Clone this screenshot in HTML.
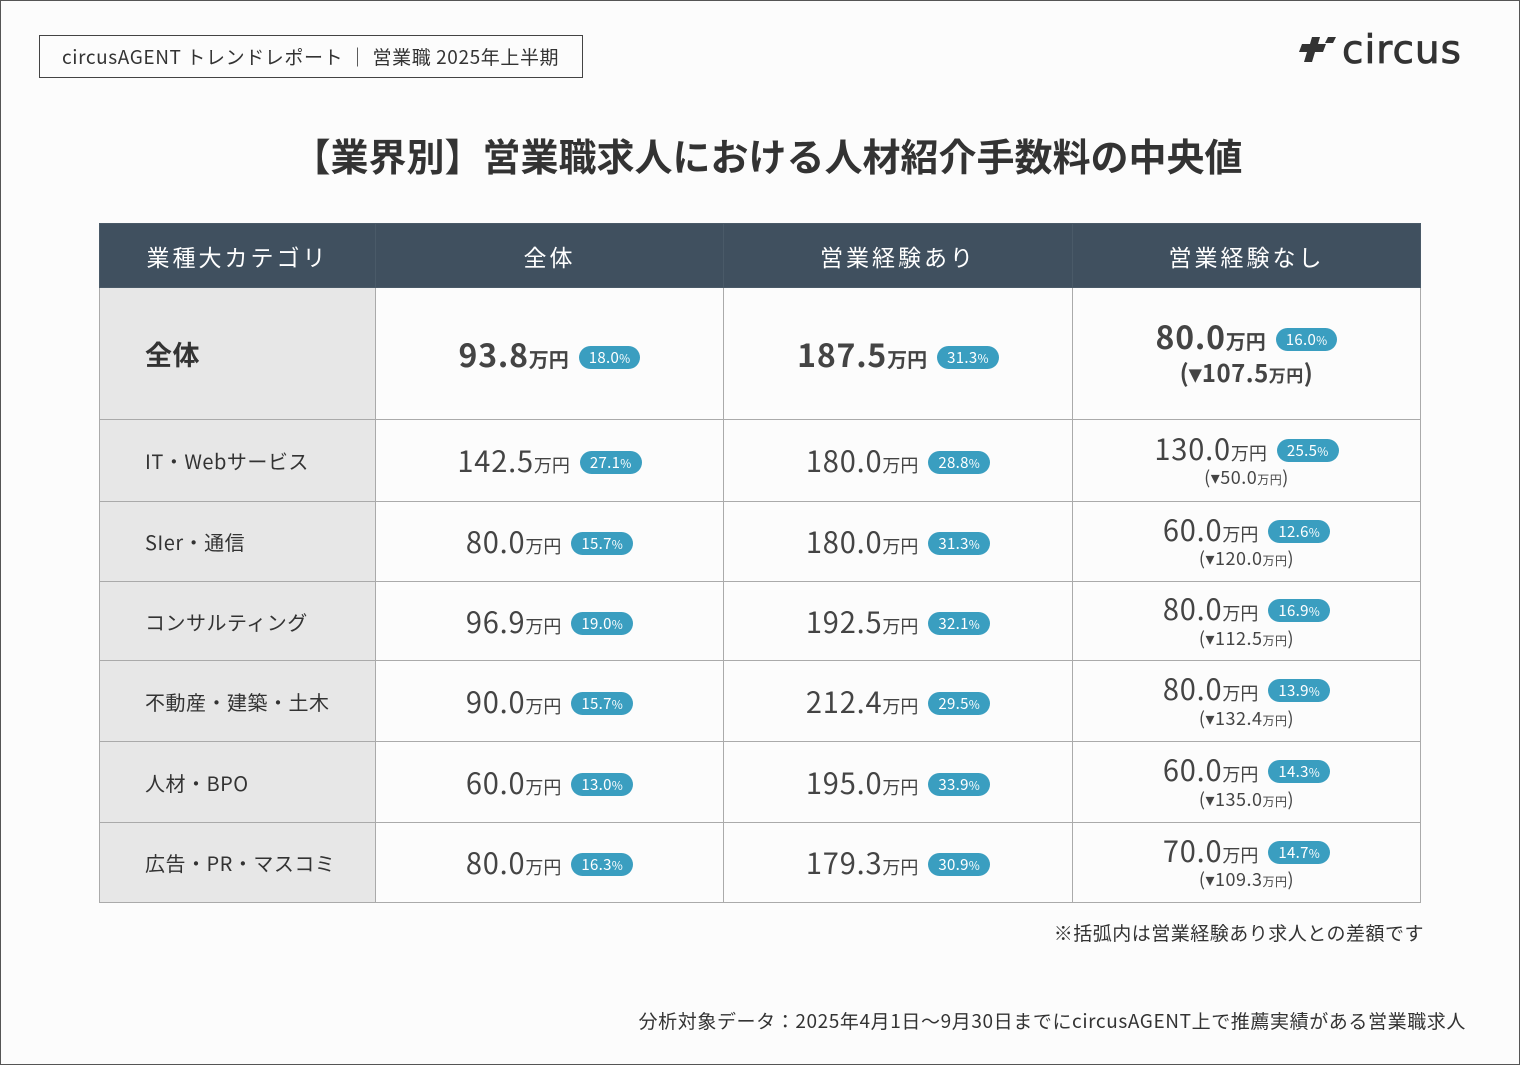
<!DOCTYPE html>
<html><head><meta charset="utf-8"><style>
*{margin:0;padding:0;box-sizing:border-box}
body{width:1520px;height:1065px;background:#fcfcfc;font-family:"Noto Sans CJK JP","Liberation Sans",sans-serif;color:#333;position:relative;overflow:hidden}
.frame{position:absolute;left:0;top:0;width:1520px;height:1065px;border:1px solid #555}
.tag{position:absolute;left:39px;top:35px;width:544px;height:43px;border:1px solid #444;font-size:19px;letter-spacing:0.6px;line-height:41px;padding-left:22px;color:#333;white-space:nowrap}
.logo{position:absolute;left:1298px;top:28px;height:44px;display:flex;align-items:center}
.logo span{font-size:39px;color:#333;font-family:"DejaVu Sans",sans-serif;margin-left:2px;letter-spacing:1px;-webkit-text-stroke:0.8px #333}
h1{position:absolute;left:0;width:1535px;top:127px;text-align:center;font-size:38px;letter-spacing:0px;font-weight:bold;color:#333;line-height:56px}
table{position:absolute;left:99px;top:223px;border-collapse:collapse;width:1322px}
td,th{border:1px solid #aaa;text-align:center;vertical-align:middle}
th{background:#40505f;color:#fff;font-weight:normal;font-size:23px;height:64px;letter-spacing:3px;border-color:#4a5a68}
td.c{background:#e7e7e7;text-align:left;padding-left:45px;font-size:20px;letter-spacing:0.5px;width:276px}
td{background:#fcfcfc;line-height:1.25}
.n{font-size:29px;color:#444;letter-spacing:0.8px}
.u{font-size:18px;letter-spacing:0}
.b{display:inline-block;background:#3a9ec0;color:#fff;font-size:15px;border-radius:12px;padding:0 10px;height:23px;line-height:23px;vertical-align:4px;margin-left:10px;letter-spacing:0.3px}
.b small{font-size:12px}
.d{font-size:18px;color:#444;line-height:22px;letter-spacing:0.5px}
.d small{font-size:12px}
tr.big .n{font-size:32px;font-weight:bold}
tr.big .u{font-size:20px}
.note{position:absolute;right:96px;top:919px;font-size:19px;letter-spacing:0.5px;color:#333}
.src{position:absolute;right:54px;top:1007px;font-size:19px;letter-spacing:0.6px;color:#333}
</style></head><body>
<div class="frame"></div>
<div class="tag">circusAGENT トレンドレポート ｜ 営業職 2025年上半期</div>
<div class="logo"><svg width="42" height="34" viewBox="0 0 42 34"><path d="M14 4h8l-2 7h8l-3 8h-8l-3 10h-8l3-10H1l3-8h8z" fill="#333"/><path d="M30 4h8l-3 6h-8z" fill="#333"/></svg><span>circus</span></div>
<h1>【業界別】営業職求人における人材紹介手数料の中央値</h1>
<table>
<tr><th style="width:276px">業種大カテゴリ</th><th style="width:348px">全体</th><th style="width:349px">営業経験あり</th><th>営業経験なし</th></tr>
<tr class="big" style="height:132px"><td class="c" style="font-size:27px;font-weight:bold">全体</td><td><span class="n">93.8<span class="u">万円</span></span><span class="b">18.0<small>%</small></span></td><td><span class="n">187.5<span class="u">万円</span></span><span class="b">31.3<small>%</small></span></td><td><span class="n">80.0<span class="u">万円</span></span><span class="b">16.0<small>%</small></span><div class="d" style="font-size:24px;font-weight:bold;line-height:32px">(▾107.5<span style="font-size:17px">万円</span>)</div></td></tr>
<tr style="height:82px"><td class="c">IT・Webサービス</td><td><span class="n">142.5<span class="u">万円</span></span><span class="b">27.1<small>%</small></span></td><td><span class="n">180.0<span class="u">万円</span></span><span class="b">28.8<small>%</small></span></td><td><span class="n">130.0<span class="u">万円</span></span><span class="b">25.5<small>%</small></span><div class="d">(▾50.0<small>万円</small>)</div></td></tr>
<tr style="height:80px"><td class="c">SIer・通信</td><td><span class="n">80.0<span class="u">万円</span></span><span class="b">15.7<small>%</small></span></td><td><span class="n">180.0<span class="u">万円</span></span><span class="b">31.3<small>%</small></span></td><td><span class="n">60.0<span class="u">万円</span></span><span class="b">12.6<small>%</small></span><div class="d">(▾120.0<small>万円</small>)</div></td></tr>
<tr style="height:79px"><td class="c">コンサルティング</td><td><span class="n">96.9<span class="u">万円</span></span><span class="b">19.0<small>%</small></span></td><td><span class="n">192.5<span class="u">万円</span></span><span class="b">32.1<small>%</small></span></td><td><span class="n">80.0<span class="u">万円</span></span><span class="b">16.9<small>%</small></span><div class="d">(▾112.5<small>万円</small>)</div></td></tr>
<tr style="height:81px"><td class="c">不動産・建築・土木</td><td><span class="n">90.0<span class="u">万円</span></span><span class="b">15.7<small>%</small></span></td><td><span class="n">212.4<span class="u">万円</span></span><span class="b">29.5<small>%</small></span></td><td><span class="n">80.0<span class="u">万円</span></span><span class="b">13.9<small>%</small></span><div class="d">(▾132.4<small>万円</small>)</div></td></tr>
<tr style="height:81px"><td class="c">人材・BPO</td><td><span class="n">60.0<span class="u">万円</span></span><span class="b">13.0<small>%</small></span></td><td><span class="n">195.0<span class="u">万円</span></span><span class="b">33.9<small>%</small></span></td><td><span class="n">60.0<span class="u">万円</span></span><span class="b">14.3<small>%</small></span><div class="d">(▾135.0<small>万円</small>)</div></td></tr>
<tr style="height:80px"><td class="c">広告・PR・マスコミ</td><td><span class="n">80.0<span class="u">万円</span></span><span class="b">16.3<small>%</small></span></td><td><span class="n">179.3<span class="u">万円</span></span><span class="b">30.9<small>%</small></span></td><td><span class="n">70.0<span class="u">万円</span></span><span class="b">14.7<small>%</small></span><div class="d">(▾109.3<small>万円</small>)</div></td></tr>
</table>
<div class="note">※括弧内は営業経験あり求人との差額です</div>
<div class="src">分析対象データ：2025年4月1日〜9月30日までにcircusAGENT上で推薦実績がある営業職求人</div>
</body></html>
